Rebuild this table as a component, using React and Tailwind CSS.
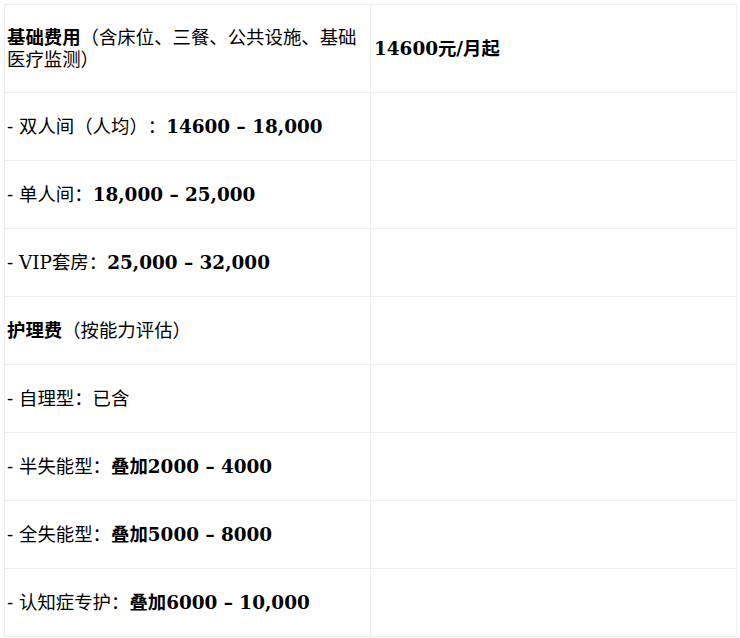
export default function App() {
  const rows = [
    [<><b>基础费用</b>（含床位、三餐、公共设施、基础医疗监测）</>, <b>14600元/月起</b>],
    [<>- 双人间（人均）：<b>14600 – 18,000</b></>, null],
    [<>- 单人间：<b>18,000 – 25,000</b></>, null],
    [<>- VIP套房：<b>25,000 – 32,000</b></>, null],
    [<><b>护理费</b>（按能力评估）</>, null],
    [<>- 自理型：已含</>, null],
    [<>- 半失能型：<b>叠加2000 – 4000</b></>, null],
    [<>- 全失能型：<b>叠加5000 – 8000</b></>, null],
    [<>- 认知症专护：<b>叠加6000 – 10,000</b></>, null],
  ];
  return (
    <div
      className="bg-white p-1 text-black text-[18.4px] leading-[22px] w-[740px] [text-spacing-trim:space-all]"
      style={{ fontFamily: '"DejaVu Serif", "Noto Sans CJK SC", serif' }}
    >
      <table className="w-[732px] table-fixed border-collapse border border-[#efefef]">
        <tbody>
          {rows.map((r, i) => (
            <tr key={i} className={i === 0 ? "h-[88px]" : "h-[68px]"}>
              <td className="border border-[#efefef] px-[2px] align-middle w-[366px]">{r[0]}</td>
              <td className="border border-[#efefef] px-[3px] align-middle w-[366px]">{r[1]}</td>
            </tr>
          ))}
        </tbody>
      </table>
    </div>
  );
}
